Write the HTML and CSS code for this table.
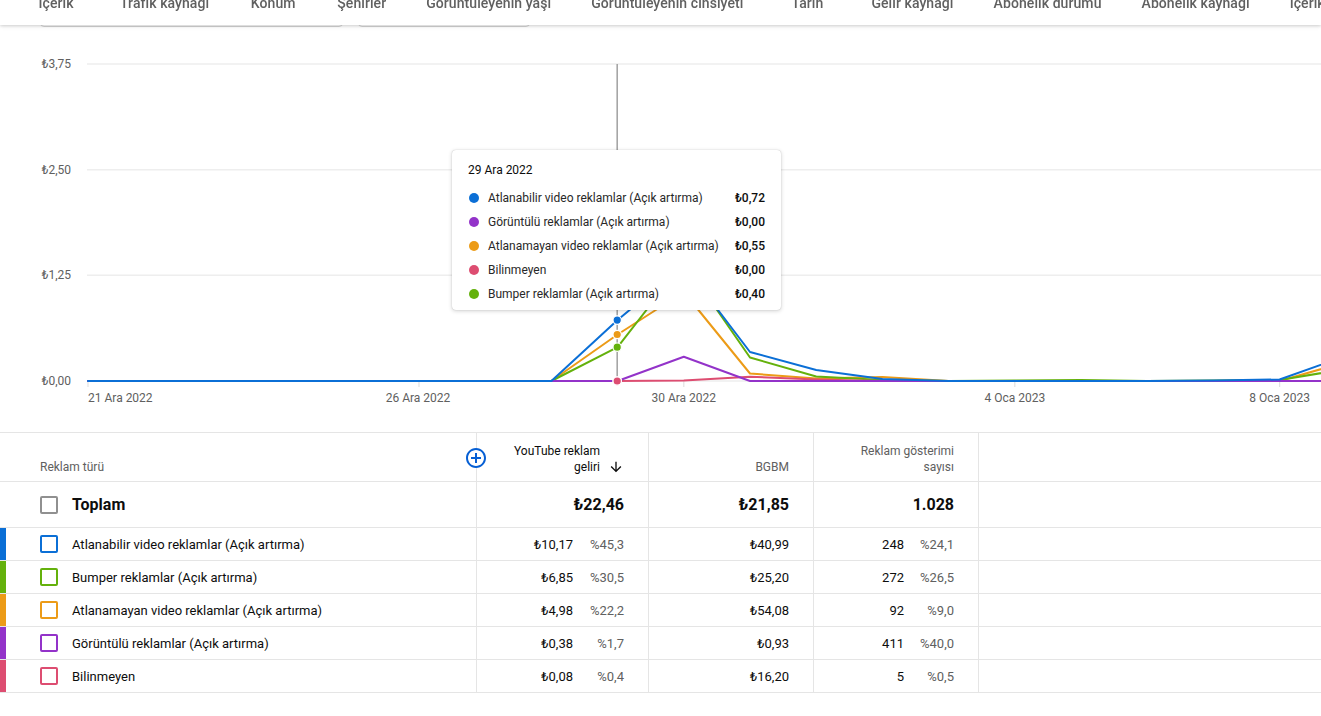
FILE: index.html
```html
<!DOCTYPE html>
<html lang="tr">
<head>
<meta charset="utf-8">
<title>Reklam türü</title>
<link rel="stylesheet" href="styles.css">
</head>
<body>
<header class="tabbar">
  <nav class="tabs">
    <span class="tab">İçerik</span>
    <span class="tab">Trafik kaynağı</span>
    <span class="tab">Konum</span>
    <span class="tab">Şehirler</span>
    <span class="tab">Görüntüleyenin yaşı</span>
    <span class="tab">Görüntüleyenin cinsiyeti</span>
    <span class="tab">Tarih</span>
    <span class="tab">Gelir kaynağı</span>
    <span class="tab">Abonelik durumu</span>
    <span class="tab">Abonelik kaynağı</span>
    <span class="tab">İçerik türü</span>
  </nav>
</header>

<main class="page">
  <div class="filters">
    <div class="filter filter-wide"></div>
    <div class="filter filter-narrow"></div>
  </div>

  <section class="chart">
    <svg class="plot" width="1321" height="405" viewBox="0 27 1321 405" xmlns="http://www.w3.org/2000/svg">
      <g class="grid">
        <line x1="87" y1="64" x2="1321" y2="64"/>
        <line x1="87" y1="169.7" x2="1321" y2="169.7"/>
        <line x1="87" y1="275.3" x2="1321" y2="275.3"/>
        <line x1="87" y1="381" x2="1321" y2="381"/>
      </g>
      <g class="ticks">
        <line x1="88" y1="381" x2="88" y2="387"/>
        <line x1="419" y1="381" x2="419" y2="387"/>
        <line x1="683.8" y1="381" x2="683.8" y2="387"/>
        <line x1="1014.8" y1="381" x2="1014.8" y2="387"/>
        <line x1="1279.6" y1="381" x2="1279.6" y2="387"/>
      </g>
      <g class="ylabels">
        <text x="71" y="68">₺3,75</text>
        <text x="71" y="173.7">₺2,50</text>
        <text x="71" y="279.3">₺1,25</text>
        <text x="71" y="385">₺0,00</text>
      </g>
      <g class="xlabels">
        <text x="88" y="402" class="start">21 Ara 2022</text>
        <text x="418" y="402">26 Ara 2022</text>
        <text x="683.8" y="402">30 Ara 2022</text>
        <text x="1014.8" y="402">4 Oca 2023</text>
        <text x="1279.6" y="402">8 Oca 2023</text>
      </g>
      <line class="cross" x1="617.2" y1="64" x2="617.2" y2="381"/>
      <g class="series">
        <polyline class="ln-orange" points="88,381 551.4,381 617.6,334.5 683.8,292 750,373.5 816.2,378.5 882.4,377 948.6,381 1279.6,381 1345.8,362"/>
        <polyline class="ln-green" points="88,381 551.4,381 617.6,347.2 683.8,262 750,357.5 816.2,376.5 882.4,380 948.6,381 1014.8,380.5 1081,380 1147.2,381 1213.4,380.5 1279.6,380 1345.8,369"/>
        <polyline class="ln-pink" points="88,381 617.6,381 683.8,380.5 750,376.7 816.2,379.5 882.4,381 1345.8,381"/>
        <polyline class="ln-purple" points="88,381 617.6,381 683.8,356.7 750,381 1345.8,381"/>
        <polyline class="ln-blue" points="88,381 551.4,381 617.6,320.1 683.8,265 750,352 816.2,370 882.4,379 948.6,381 1147.2,381 1213.4,380.5 1279.6,379.5 1345.8,356"/>
      </g>
      <g class="dots">
        <circle class="dot-purple" cx="617.2" cy="381" r="4.2"/>
        <circle class="dot-pink" cx="617.2" cy="381" r="4.2"/>
        <circle class="dot-green" cx="617.2" cy="347.2" r="4.2"/>
        <circle class="dot-orange" cx="617.2" cy="334.5" r="4.2"/>
        <circle class="dot-blue" cx="617.2" cy="320.1" r="4.2"/>
      </g>
    </svg>

    <div class="tooltip">
      <div class="tt-title">29 Ara 2022</div>
      <div class="tt-row"><span class="tt-dot s-blue"></span><span class="tt-label">Atlanabilir video reklamlar (Açık artırma)</span><span class="tt-val">₺0,72</span></div>
      <div class="tt-row"><span class="tt-dot s-purple"></span><span class="tt-label">Görüntülü reklamlar (Açık artırma)</span><span class="tt-val">₺0,00</span></div>
      <div class="tt-row"><span class="tt-dot s-orange"></span><span class="tt-label">Atlanamayan video reklamlar (Açık artırma)</span><span class="tt-val">₺0,55</span></div>
      <div class="tt-row"><span class="tt-dot s-pink"></span><span class="tt-label">Bilinmeyen</span><span class="tt-val">₺0,00</span></div>
      <div class="tt-row"><span class="tt-dot s-green"></span><span class="tt-label">Bumper reklamlar (Açık artırma)</span><span class="tt-val">₺0,40</span></div>
    </div>
  </section>

  <section class="table">
    <div class="row head">
      <div class="cell first">
        <span>Reklam türü</span>
        <svg class="add" width="24" height="24" viewBox="0 0 24 24" xmlns="http://www.w3.org/2000/svg">
          <circle cx="12" cy="12" r="9" fill="#fff"/>
          <path d="M13 7h-2v4H7v2h4v4h2v-4h4v-2h-4V7zm-1-5C6.48 2 2 6.48 2 12s4.48 10 10 10 10-4.48 10-10S17.520 2 12 2zm0 18c-4.41 0-8-3.59-8-8s3.59-8 8-8 8 3.590 8 8-3.59 8-8 8z"/>
        </svg>
      </div>
      <div class="cell sorted">
        <span>YouTube reklam<br>geliri</span>
        <svg class="arrow" width="16" height="16" viewBox="0 0 24 24" xmlns="http://www.w3.org/2000/svg">
          <path d="M20 12l-1.41-1.41L13 16.17V4h-2v12.17l-5.58-5.59L4 12l8 8 8-8z"/>
        </svg>
      </div>
      <div class="cell"><span>BGBM</span></div>
      <div class="cell"><span>Reklam gösterimi<br>sayısı</span></div>
      <div class="cell"></div>
    </div>

    <div class="row total">
      <div class="cell first"><span class="check c-gray"></span><span>Toplam</span></div>
      <div class="cell">₺22,46</div>
      <div class="cell">₺21,85</div>
      <div class="cell">1.028</div>
      <div class="cell"></div>
    </div>

    <div class="row data">
      <div class="cell first"><span class="bar s-blue"></span><span class="check c-blue"></span><span>Atlanabilir video reklamlar (Açık artırma)</span></div>
      <div class="cell"><span>₺10,17</span><span class="pct">%45,3</span></div>
      <div class="cell">₺40,99</div>
      <div class="cell"><span>248</span><span class="pct pct-n">%24,1</span></div>
      <div class="cell"></div>
    </div>
    <div class="row data">
      <div class="cell first"><span class="bar s-green"></span><span class="check c-green"></span><span>Bumper reklamlar (Açık artırma)</span></div>
      <div class="cell"><span>₺6,85</span><span class="pct">%30,5</span></div>
      <div class="cell">₺25,20</div>
      <div class="cell"><span>272</span><span class="pct pct-n">%26,5</span></div>
      <div class="cell"></div>
    </div>
    <div class="row data">
      <div class="cell first"><span class="bar s-orange"></span><span class="check c-orange"></span><span>Atlanamayan video reklamlar (Açık artırma)</span></div>
      <div class="cell"><span>₺4,98</span><span class="pct">%22,2</span></div>
      <div class="cell">₺54,08</div>
      <div class="cell"><span>92</span><span class="pct pct-n">%9,0</span></div>
      <div class="cell"></div>
    </div>
    <div class="row data">
      <div class="cell first"><span class="bar s-purple"></span><span class="check c-purple"></span><span>Görüntülü reklamlar (Açık artırma)</span></div>
      <div class="cell"><span>₺0,38</span><span class="pct">%1,7</span></div>
      <div class="cell">₺0,93</div>
      <div class="cell"><span>411</span><span class="pct pct-n">%40,0</span></div>
      <div class="cell"></div>
    </div>
    <div class="row data">
      <div class="cell first"><span class="bar s-pink"></span><span class="check c-pink"></span><span>Bilinmeyen</span></div>
      <div class="cell"><span>₺0,08</span><span class="pct">%0,4</span></div>
      <div class="cell">₺16,20</div>
      <div class="cell"><span>5</span><span class="pct pct-n">%0,5</span></div>
      <div class="cell"></div>
    </div>
  </section>
</main>
</body>
</html>
```

FILE: styles.css
```css
* { box-sizing: border-box; }

html, body {
  margin: 0;
  padding: 0;
  background: #fff;
}

body {
  width: 1321px;
  height: 716px;
  overflow: hidden;
  font-family: Roboto, "Noto Sans", "DejaVu Sans", Arial, sans-serif;
  color: #0d0d0d;
}

/* ---------- top tab bar (overlays the page) ---------- */
.tabbar {
  position: fixed;
  top: 0;
  left: 0;
  width: 1321px;
  height: 25px;
  background: #fff;
  box-shadow: 0 1px 3px rgba(0, 0, 0, 0.16), 0 2px 5px rgba(0, 0, 0, 0.05);
  z-index: 10;
  overflow: hidden;
}

.tabs {
  display: flex;
  margin-top: -5px;
  padding-left: 12px;
  white-space: nowrap;
}

.tab {
  flex: none;
  box-sizing: content-box;
  min-width: 48px;
  padding: 0 20px;
  text-align: center;
  font-size: 14px;
  line-height: 16px;
  font-weight: 500;
  letter-spacing: 0.08px;
  color: #606060;
}

/* ---------- filter boxes (mostly hidden under bar) ---------- */
.filters {
  display: flex;
  gap: 15px;
  padding-left: 40px;
  height: 27px;
}

.filter {
  height: 27px;
  border: 1px solid #d3d3d3;
  border-radius: 4px;
}

.filter-wide { width: 303px; }
.filter-narrow { width: 172px; }

/* ---------- chart ---------- */
.chart {
  position: relative;
  height: 405px;
}

.plot { display: block; }

.grid line {
  stroke: #eeeeee;
  stroke-width: 1.4;
}

.ticks line {
  stroke: #e2e2e2;
  stroke-width: 1.2;
}

.ylabels text {
  font-size: 12px;
  fill: #606060;
  text-anchor: end;
}

.xlabels text {
  font-size: 12px;
  fill: #606060;
  text-anchor: middle;
}

.xlabels text.start { text-anchor: start; }

.cross {
  stroke: #a6a6a6;
  stroke-width: 1.6;
}

.series polyline {
  fill: none;
  stroke-width: 2;
  stroke-linejoin: round;
  stroke-linecap: round;
}

.ln-blue { stroke: #0b6fd6; }
.ln-green { stroke: #64b10c; }
.ln-orange { stroke: #ec9b17; }
.ln-purple { stroke: #9333c9; }
.ln-pink { stroke: #dd4d71; }

.dots circle {
  stroke: #fff;
  stroke-width: 1.2;
}

.dot-blue { fill: #0b6fd6; }
.dot-green { fill: #64b10c; }
.dot-orange { fill: #ec9b17; }
.dot-purple { fill: #9333c9; }
.dot-pink { fill: #dd4d71; }

/* ---------- tooltip ---------- */
.tooltip {
  position: absolute;
  left: 452px;
  top: 123px;
  width: 329px;
  height: 160px;
  background: #fff;
  border-radius: 4px;
  box-shadow: 0 0 1px rgba(0, 0, 0, 0.25), 0 1px 4px rgba(0, 0, 0, 0.18);
  padding: 12px 16px 4px;
  z-index: 2;
}

.tt-title {
  font-size: 12px;
  line-height: 16px;
  color: #0d0d0d;
  margin-bottom: 8px;
}

.tt-row {
  display: flex;
  align-items: center;
  height: 24px;
  font-size: 12px;
}

.tt-dot {
  flex: none;
  width: 10px;
  height: 10px;
  border-radius: 50%;
  margin-left: 1px;
  margin-right: 9px;
}

.tt-label {
  flex: 1;
  color: #282828;
}

.tt-val {
  font-weight: 500;
  color: #0d0d0d;
}

.s-blue { background: #0b6fd6; }
.s-green { background: #64b10c; }
.s-orange { background: #ec9b17; }
.s-purple { background: #9333c9; }
.s-pink { background: #dd4d71; }

/* ---------- table ---------- */
.table {
  border-top: 1px solid #e5e5e5;
}

.row {
  display: grid;
  grid-template-columns: 477px 172px 165px 165px 1fr;
  border-bottom: 1px solid #e5e5e5;
}

.cell {
  display: flex;
  align-items: center;
  justify-content: flex-end;
  padding-right: 24px;
  border-right: 1px solid #e5e5e5;
  white-space: nowrap;
}

.cell:last-child { border-right: none; }

.cell.first {
  justify-content: flex-start;
  padding-left: 40px;
  padding-right: 0;
}

.head { height: 49px; }

.head .cell {
  align-items: flex-end;
  padding-bottom: 6px;
  font-size: 12px;
  line-height: 16px;
  color: #606060;
  text-align: right;
}

.head .cell.first {
  position: relative;
  text-align: left;
}

.head .cell.sorted {
  color: #0d0d0d;
}

.add {
  position: absolute;
  right: -12px;
  top: 13px;
  fill: #065fd4;
  z-index: 1;
}

.arrow {
  flex: none;
  margin-left: 8px;
  fill: #0d0d0d;
}

.total {
  height: 46px;
  font-size: 16px;
  font-weight: 700;
}

.data {
  height: 33px;
  font-size: 13px;
}

.data .cell.first { padding-left: 0; }

.bar {
  flex: none;
  align-self: stretch;
  width: 6px;
  margin-right: 34px;
}

.check {
  flex: none;
  width: 18px;
  height: 18px;
  border: 2px solid;
  border-radius: 2px;
  margin-right: 14px;
}

.c-gray { border-color: #909090; }
.c-blue { border-color: #0b6fd6; }
.c-green { border-color: #64b10c; }
.c-orange { border-color: #ec9b17; }
.c-purple { border-color: #9333c9; }
.c-pink { border-color: #dd4d71; }

.pct {
  min-width: 51px;
  text-align: right;
  color: #606060;
}

.pct-n { min-width: 50px; }
```
